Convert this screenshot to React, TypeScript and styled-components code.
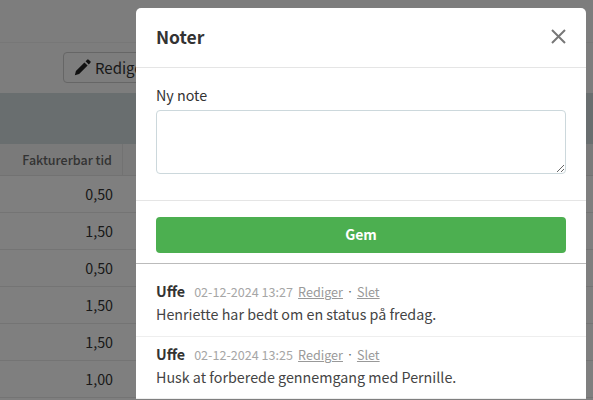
import React from 'react'
import styled, { createGlobalStyle } from 'styled-components'

const GlobalStyle = createGlobalStyle`
  html, body {
    height: 400px;
    margin: 0;
    overflow: hidden;
  }
  body {
    background: #fff;
    color: #333;
    font-family: "Noto Sans CJK SC", "Noto Sans", sans-serif;
    font-size: 14px;
  }
  * {
    box-sizing: border-box;
  }
`

const Page = styled.div`
  background: #fff;
  height: 400px;
  overflow: hidden;
  position: relative;
  width: 593px;
`

const TopBar = styled.div`
  background: #fafafa;
  border-bottom: 1px solid #eee;
  height: 43px;
`

const Toolbar = styled.div`
  align-items: flex-start;
  background: #fafafa;
  display: flex;
  height: 50px;
  padding: 9px 0 0 63px;
`

const EditButton = styled.div`
  align-items: center;
  border: 1px solid #ccc;
  border-radius: 4px;
  color: #333;
  display: flex;
  font-size: 15px;
  gap: 4px;
  height: 31px;
  padding: 0 10px;
  width: 120px;
`

const Band = styled.div`
  background: #d2dcdf;
  height: 51px;
`

const HeaderRow = styled.div`
  background: #f4f4f4;
  border-bottom: 1px solid #e4e4e4;
  display: flex;
  height: 32px;
`

const HeaderCell = styled.div`
  align-items: center;
  border-right: 1px solid #e4e4e4;
  color: #666;
  display: flex;
  font-size: 12.5px;
  font-weight: 500;
  height: 100%;
  justify-content: flex-end;
  padding-right: 10px;
  width: 123px;
`

const Row = styled.div`
  align-items: center;
  display: flex;
  font-size: 14.3px;
  height: 34px;
  justify-content: flex-end;
  padding-right: 10px;
  width: 123px;
`

const RowLine = styled.div`
  border-bottom: 1px solid #e8e8e8;
  height: 37px;
`

const Backdrop = styled.div`
  background: rgba(0, 0, 0, 0.5);
  inset: 0;
  position: absolute;
`

const Modal = styled.div`
  background: #fff;
  border-radius: 5px 5px 0 0;
  display: flex;
  flex-direction: column;
  left: 136px;
  position: absolute;
  top: 8px;
  width: 450px;
`

const ModalHeader = styled.div`
  align-items: center;
  border-bottom: 1px solid #e5e5e5;
  display: flex;
  height: 60px;
  justify-content: space-between;
  padding: 0 20px 2px;
`

const Title = styled.h4`
  color: #333;
  font-size: 17.5px;
  font-weight: 700;
  margin: 0;
`

const CloseButton = styled.button`
  background: none;
  border: 0;
  display: flex;
  padding: 0;
`

const FormSection = styled.div`
  border-bottom: 1px solid #e5e5e5;
  height: 133px;
  padding: 16px 20px 0;
`

const Label = styled.label`
  color: #333;
  display: block;
  font-size: 14.3px;
  font-weight: 400;
  line-height: 22px;
  margin-bottom: 4px;
`

const NoteInput = styled.textarea`
  background: #fff;
  border: 1px solid #ccd8dc;
  border-radius: 4px;
  display: block;
  height: 64px;
  width: 100%;
`

const SaveSection = styled.div`
  border-bottom: 1px solid #bbb;
  height: 63px;
  padding: 16px 20px 0;
`

const SaveButton = styled.button`
  background: #4caf50;
  border: 0;
  border-radius: 4px;
  color: #fff;
  display: block;
  font-family: inherit;
  font-size: 14px;
  font-weight: 700;
  height: 36px;
  padding: 0 0 2px;
  width: 100%;
`

const NoteItem = styled.div<{ $height: number; $top: number }>`
  border-bottom: 1px solid #eee;
  height: ${({ $height }) => $height}px;
  padding: ${({ $top }) => $top}px 20px 0;
`

const NoteMeta = styled.div`
  align-items: baseline;
  display: flex;
  line-height: 20px;
`

const Author = styled.span`
  color: #333;
  font-size: 14.3px;
  font-weight: 700;
  margin-right: 9px;
`

const Stamp = styled.span`
  color: #a6a6a6;
  font-size: 12.6px;
  margin-right: 5px;
`

const MetaLink = styled.a`
  color: #999;
  font-size: 12.6px;
  text-decoration: underline;
`

const Dot = styled.span`
  color: #666;
  font-size: 8px;
  margin: 0 3px;
  position: relative;
  top: -2px;
`

const NoteText = styled.div`
  color: #444;
  font-size: 14.3px;
  line-height: 22px;
  margin-top: -1px;
`

const rows = ['0,50', '1,50', '0,50', '1,50', '1,50', '1,00']

const notes = [
  { stamp: '02-12-2024 13:27', text: 'Henriette har bedt om en status på fredag.', height: 73, top: 17 },
  { stamp: '02-12-2024 13:25', text: 'Husk at forberede gennemgang med Pernille.', height: 62, top: 7 },
]

const App: React.FC = () => (
  <Page>
    <GlobalStyle />
    <TopBar />
    <Toolbar>
      <EditButton>
        <svg width="17" height="17" viewBox="0 0 16 16">
          <path d="M12.4.6a1 1 0 0 1 1.4 0l1.6 1.6a1 1 0 0 1 0 1.4l-1.5 1.5-3-3zM9.8 3.2l3 3-8 8-4 1.2 1-4.2z" fill="#222" />
        </svg>
        Rediger
      </EditButton>
    </Toolbar>
    <Band />
    <HeaderRow>
      <HeaderCell>Fakturerbar tid</HeaderCell>
    </HeaderRow>
    {rows.map((value, i) => (
      <RowLine key={i}>
        <Row>{value}</Row>
      </RowLine>
    ))}
    <Backdrop />
    <Modal>
      <ModalHeader>
        <Title>Noter</Title>
        <CloseButton>
          <svg width="15" height="15" viewBox="0 0 15 15">
            <path d="M1 1l13 13M14 1L1 14" stroke="#777" strokeWidth="2" fill="none" />
          </svg>
        </CloseButton>
      </ModalHeader>
      <FormSection>
        <Label>Ny note</Label>
        <NoteInput />
      </FormSection>
      <SaveSection>
        <SaveButton>Gem</SaveButton>
      </SaveSection>
      {notes.map((note) => (
        <NoteItem key={note.stamp} $height={note.height} $top={note.top}>
          <NoteMeta>
            <Author>Uffe</Author>
            <Stamp>{note.stamp}</Stamp>
            <MetaLink>Rediger</MetaLink>
            <Dot>•</Dot>
            <MetaLink>Slet</MetaLink>
          </NoteMeta>
          <NoteText>{note.text}</NoteText>
        </NoteItem>
      ))}
    </Modal>
  </Page>
)

export default App
